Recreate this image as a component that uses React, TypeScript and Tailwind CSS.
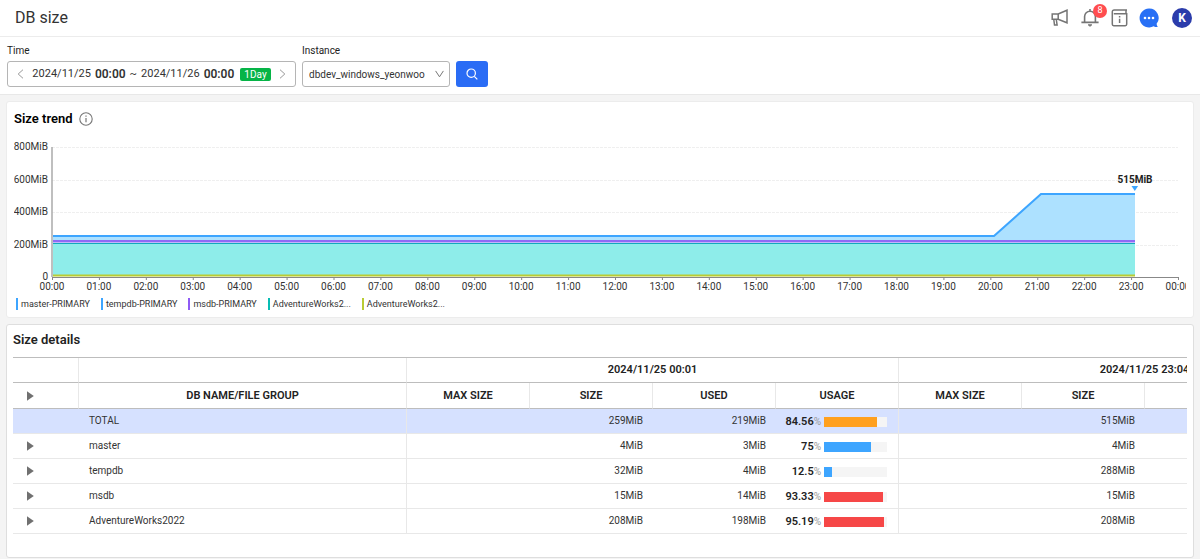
import { useState } from 'react';
import { clsx } from 'clsx';

interface DbRow {
  name: string;
  size: string;
  used: string;
  usage: number;
  lastSize: string;
}

const ROWS: DbRow[] = [
  { name: 'TOTAL', size: '259MiB', used: '219MiB', usage: 84.56, lastSize: '515MiB' },
  { name: 'master', size: '4MiB', used: '3MiB', usage: 75, lastSize: '4MiB' },
  { name: 'tempdb', size: '32MiB', used: '4MiB', usage: 12.5, lastSize: '288MiB' },
  { name: 'msdb', size: '15MiB', used: '14MiB', usage: 93.33, lastSize: '15MiB' },
  { name: 'AdventureWorks2022', size: '208MiB', used: '198MiB', usage: 95.19, lastSize: '208MiB' },
];

const LEGEND = [
  { label: 'master-PRIMARY', color: 'bg-[#3da5ff]' },
  { label: 'tempdb-PRIMARY', color: 'bg-[#3da5ff]' },
  { label: 'msdb-PRIMARY', color: 'bg-[#8f5bf5]' },
  { label: 'AdventureWorks2...', color: 'bg-[#08bdb4]' },
  { label: 'AdventureWorks2...', color: 'bg-[#b9cc33]' },
];

const Y_TICKS = [
  { label: '800MiB', y: 12 },
  { label: '600MiB', y: 45 },
  { label: '400MiB', y: 77 },
  { label: '200MiB', y: 110 },
  { label: '0', y: 142 },
];

const HOURS = Array.from({ length: 25 }, (_, i) => `${String(i % 24).padStart(2, '0')}:00`);

const CHART_LEFT = 38;
const CHART_RIGHT = 1164;

const usageColor = (usage: number) => {
  if (usage >= 90) return 'bg-[#f64747]';
  if (usage >= 80) return 'bg-[#ffa01f]';
  return 'bg-[#3da5ff]';
};

function Header() {
  return (
    <header className="flex h-[37px] items-center justify-between border-b border-[#ececec] pl-[15px] pr-2">
      <h1 className="text-base text-[#333]">DB size</h1>
      <div className="flex items-center gap-2.5 text-[#757575]">
        <button type="button" aria-label="Announcements">
          <svg width="20" height="20" viewBox="0 0 20 20" fill="none" stroke="currentColor" strokeWidth="1.5">
            <path d="M3.2 6h6L18 2.200v12.600L9.200 11.300h-6z" />
            <path d="M9.200 6v5.300M4.800 11.500l.7 5.400h2.600l-.8-5.400" />
          </svg>
        </button>
        <button type="button" aria-label="Notifications" className="relative">
          <svg width="20" height="20" viewBox="0 0 20 20" fill="none" stroke="currentColor" strokeWidth="1.6">
            <path d="M5.600 14.200V8.600a5.400 5.400 0 0 1 10.800 0v5.600M2.400 14.400h17.200M11 1v2.200" />
            <path d="M9.200 16.800h3.600L11 18.300z" fill="currentColor" strokeWidth="1" />
          </svg>
          <span className="absolute -top-1 left-3.5 flex size-3.5 items-center justify-center rounded-full bg-[#ff4d4f] text-[9px] text-white">
            8
          </span>
        </button>
        <button type="button" aria-label="Guide">
          <svg width="20" height="20" viewBox="0 0 20 20" fill="none" stroke="currentColor" strokeWidth="1.5">
            <path d="M18 2H5.100a1.800 1.800 0 0 0-1.800 1.900V16.300c0 .9.500 1.400 1.400 1.400h11.600c.9 0 1.400-.5 1.400-1.400V5.700H4.800M17 2v3.600" />
            <path d="M10.600 8v1.600M10.600 10.800v4.200" />
          </svg>
        </button>
        <button type="button" aria-label="Chat">
          <svg width="20" height="20" viewBox="0 0 20 20">
            <path
              d="M10 .6a9.4 9.4 0 1 0 4.6 17.6c1.3.7 2.8 1 4.2.8-.7-.9-1.1-2-1.2-3.200A9.400 9.400 0 0 0 10 .6z"
              fill="#2870f5"
            />
            <circle cx="6" cy="10" r="1.300" fill="#fff" />
            <circle cx="10" cy="10" r="1.300" fill="#fff" />
            <circle cx="14" cy="10" r="1.300" fill="#fff" />
          </svg>
        </button>
        <button
          type="button"
          aria-label="Account"
          className="ml-[3px] flex size-5 items-center justify-center rounded-full bg-[#2b3cab] text-xs font-bold text-white"
        >
          K
        </button>
      </div>
    </header>
  );
}

function Filters() {
  const [instance, setInstance] = useState('dbdev_windows_yeonwoo');

  return (
    <form
      className="flex items-end gap-1.5 border-b border-[#e8e8e8] px-[7px] pb-[7px] pt-[7px]"
      onSubmit={(e) => e.preventDefault()}
    >
      <div role="group" aria-labelledby="time-label">
        <div id="time-label" className="mb-[3px] text-[10px] leading-[14px] text-[#222]">
          Time
        </div>
        <div className="flex h-[26px] w-[289px] items-center justify-between rounded-[3px] border border-[#b5b5b5] px-[9px] text-[#333]">
          <button type="button" aria-label="Previous period">
            <svg width="7" height="10" viewBox="0 0 7 10" fill="none" stroke="#999">
              <path d="M6 .7 1.200 5 6 9.300" />
            </svg>
          </button>
          <button type="button" className="flex items-center gap-1 whitespace-nowrap text-[11px] leading-4">
            <span>2024/11/25</span>
            <span className="text-xs font-semibold">00:00</span>
            <span>~</span>
            <span>2024/11/26</span>
            <span className="text-xs font-semibold">00:00</span>
            <span className="ml-0.5 h-[13px] rounded-xs bg-[#06b447] px-1 text-[10px] leading-[13px] text-white">
              1Day
            </span>
          </button>
          <button type="button" aria-label="Next period">
            <svg width="7" height="10" viewBox="0 0 7 10" fill="none" stroke="#999">
              <path d="M1 .7 5.800 5 1 9.300" />
            </svg>
          </button>
        </div>
      </div>
      <div>
        <label htmlFor="instance" className="mb-[3px] block text-[10px] leading-[14px] text-[#222]">
          Instance
        </label>
        <div className="relative">
          <select
            id="instance"
            value={instance}
            onChange={(e) => setInstance(e.target.value)}
            className="block h-[26px] w-[148px] appearance-none rounded-[3px] border border-[#b5b5b5] bg-white pl-1.5 text-[10px] text-[#333]"
          >
            <option value="dbdev_windows_yeonwoo">dbdev_windows_yeonwoo</option>
          </select>
          <svg
            className="pointer-events-none absolute right-1.5 top-[9px]"
            width="9"
            height="8"
            viewBox="0 0 9 8"
            fill="none"
            stroke="#777"
          >
            <path d="M.6.900 4.500 6.800 8.400.900" />
          </svg>
        </div>
      </div>
      <button
        type="submit"
        aria-label="Search"
        className="flex h-[26px] w-8 items-center justify-center rounded-[3px] bg-[#2a6cf5]"
      >
        <svg width="12" height="12" viewBox="0 0 12 12" fill="none" stroke="#fff" strokeWidth="1.200">
          <circle cx="5.200" cy="5.200" r="4.200" />
          <path d="m8.300 8.300 3 3" />
        </svg>
      </button>
    </form>
  );
}

function TrendChart() {
  const step = (CHART_RIGHT - CHART_LEFT) / 24;

  return (
    <svg viewBox="0 0 1172 158" className="block w-full overflow-hidden" role="img" aria-label="Size trend">
      {Y_TICKS.map((tick) => (
        <g key={tick.label}>
          <line x1={CHART_LEFT} x2={CHART_RIGHT} y1={tick.y + 0.5} y2={tick.y + 0.5} stroke="#efefef" strokeDasharray="3 1" />
          <text x="34" y={tick.y + 3} textAnchor="end" className="fill-[#333] text-[10px]">
            {tick.label}
          </text>
        </g>
      ))}
      {/* stacked areas, top series first */}
      <path d="M39 101H980L1027 59H1121V106H39z" fill="#ade1ff" />
      <path d="M39 106H1121V109H39z" fill="#c5b4fb" />
      <path d="M39 109H1121V141H39z" fill="#8eedea" />
      <path d="M39 101H980L1027 59H1121" fill="none" stroke="#3da5ff" strokeWidth="2" />
      <path d="M39 106H1121" stroke="#8f6bf5" strokeWidth="2" />
      <path d="M39 108.500H1121" stroke="#12a9bd" strokeWidth="1" />
      <path d="M39 140.500H1121" stroke="#b9cc33" strokeWidth="2" />
      <path d="M38 12V142" stroke="#aaa" strokeWidth="1.500" />
      <path d={`M${CHART_LEFT} 142.500H${CHART_RIGHT + 1}`} stroke="#888" />
      {HOURS.map((hour, i) => {
        const x = CHART_LEFT + i * step;
        return (
          <g key={i}>
            <line x1={x + 0.5} x2={x + 0.5} y1="142" y2="145" stroke="#888" />
            <text x={x} y="155" textAnchor="middle" className="fill-[#333] text-[10px]">
              {hour}
            </text>
          </g>
        );
      })}
      <text x="1121" y="48" textAnchor="middle" className="fill-[#222] text-[10px] font-bold">
        515MiB
      </text>
      <path d="M1117.500 51h6.600l-3.300 5z" fill="#3da5ff" />
    </svg>
  );
}

function SizeTrend() {
  return (
    <section className="rounded-[3px] border border-[#ececec] bg-white px-[7px] pb-[6px] pt-2">
      <div className="flex h-[18px] items-center gap-1.5">
        <h2 className="text-[13px] font-semibold text-black">Size trend</h2>
        <svg width="14" height="14" viewBox="0 0 14 14" fill="none" stroke="#777">
          <circle cx="7" cy="7" r="6.200" strokeWidth="1.100" />
          <path d="M7 6v4.200M7 3.600v1.200" strokeWidth="1.200" />
        </svg>
      </div>
      <div className="mt-[7px]">
        <TrendChart />
      </div>
      <ul className="mt-1 flex gap-[11px] pl-0.5 text-[9px] leading-[14px] text-[#333]">
        {LEGEND.map((item, i) => (
          <li key={i} className="flex items-center gap-[3px]">
            <span className={clsx('h-3 w-0.5', item.color)} />
            {item.label}
          </li>
        ))}
      </ul>
    </section>
  );
}

function ExpandButton({ label }: { label: string }) {
  return (
    <button type="button" aria-label={label} className="flex pl-3.5">
      <svg width="7" height="10" viewBox="0 0 7 10">
        <path d="M0 .3 6.800 5 0 9.700z" fill="#707070" />
      </svg>
    </button>
  );
}

function UsageCell({ usage }: { usage: number }) {
  return (
    <div className="flex items-center justify-end pr-[11px] pt-0.5">
      <span className="text-[11px] font-semibold text-[#222]">{usage}</span>
      <span className="text-[#999]">%</span>
      <div className="ml-[3px] h-2.5 w-[63px] bg-[#f5f5f5]">
        <div className={clsx('h-full', usageColor(usage))} style={{ width: `${usage}%` }} />
      </div>
    </div>
  );
}

const HEAD_CELL = 'border-b border-r border-b-[#bdbdbd] border-r-[#e8e8e8] p-0 font-semibold';
const BODY_CELL = 'border-b border-[#e8e8e8] p-0';

function SizeDetails() {
  return (
    <section className="rounded-[3px] border border-[#dedede] bg-white px-[6px] pb-[23px] pt-1.5">
      <h2 className="text-[13px] font-semibold leading-[18px] text-[#222]">Size details</h2>
      <div className="mt-2 overflow-hidden">
        <table className="w-[1378px] table-fixed border-separate border-spacing-0 border-t border-[#bdbdbd] text-[10px] leading-4 text-[#333]">
          <colgroup>
            <col className="w-[66px]" />
            <col className="w-[328px]" />
            <col span={8} className="w-[123px]" />
          </colgroup>
          <thead className="text-[11px] text-[#222]">
            <tr className="h-[25px]">
              <th className={HEAD_CELL} />
              <th className={HEAD_CELL} />
              <th className={HEAD_CELL} colSpan={4}>2024/11/25 00:01</th>
              <th className={HEAD_CELL} colSpan={4}>2024/11/25 23:04</th>
            </tr>
            <tr className="h-[26px]">
              <th className={HEAD_CELL}>
                <ExpandButton label="Expand all" />
              </th>
              <th className={HEAD_CELL}>DB NAME/FILE GROUP</th>
              {['MAX SIZE', 'SIZE', 'USED', 'USAGE', 'MAX SIZE', 'SIZE', '', ''].map((title, i) => (
                <th key={i} className={HEAD_CELL}>{title}</th>
              ))}
            </tr>
          </thead>
          <tbody>
            {ROWS.map((row) => {
              const isTotal = row.name === 'TOTAL';
              return (
                <tr key={row.name} className={clsx('h-[25px]', isTotal && 'bg-[#d6e1ff]')}>
                  <td className={BODY_CELL}>{!isTotal && <ExpandButton label={`Expand ${row.name}`} />}</td>
                  <td className={clsx(BODY_CELL, 'border-r')}>
                    <span className="pl-2.5">{row.name}</span>
                  </td>
                  <td className={BODY_CELL} />
                  <td className={clsx(BODY_CELL, 'text-right')}>
                    <span className="pr-2.5">{row.size}</span>
                  </td>
                  <td className={clsx(BODY_CELL, 'text-right')}>
                    <span className="pr-2.5">{row.used}</span>
                  </td>
                  <td className={clsx(BODY_CELL, 'border-r')}>
                    <UsageCell usage={row.usage} />
                  </td>
                  <td className={BODY_CELL} />
                  <td className={clsx(BODY_CELL, 'text-right')}>
                    <span className="pr-2.5">{row.lastSize}</span>
                  </td>
                  <td className={BODY_CELL} />
                  <td className={BODY_CELL} />
                </tr>
              );
            })}
          </tbody>
        </table>
      </div>
    </section>
  );
}

export default function App() {
  return (
    <div className="min-h-screen bg-[#f4f4f4] font-['Roboto',sans-serif]">
      <div className="bg-white">
        <Header />
        <Filters />
      </div>
      <main className="flex flex-col gap-1.5 px-1.5 pt-1.5">
        <SizeTrend />
        <SizeDetails />
      </main>
    </div>
  );
}
